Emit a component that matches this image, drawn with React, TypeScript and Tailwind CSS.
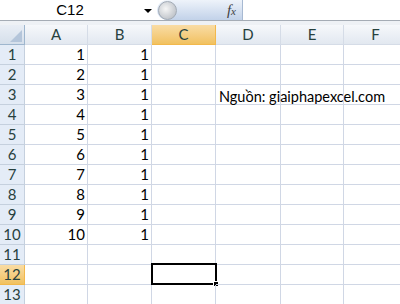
import React from "react";

const cols = ["A", "B", "C", "D", "E", "F"];
const widths = [63, 64, 64, 65, 63, 64];
const rows = Array.from({ length: 13 }, (_, i) => i + 1);

function cellText(r: number, c: number) {
  if (r <= 10 && c === 0) return String(r);
  if (r <= 10 && c === 1) return "1";
  return "";
}

export default function App() {
  return (
    <div className="w-[400px] h-[304px] overflow-hidden bg-white font-['Lato','Liberation_Sans',sans-serif] text-[15px] text-black">
      {/* formula bar */}
      <div className="flex h-[21px] items-stretch border-b border-[#a5acb5] bg-white">
        <div className="relative w-[157px] flex items-center">
          <span className="w-[140px] text-center font-['Liberation_Sans',sans-serif] text-[15px]">C12</span>
          <span className="absolute left-[144px] top-[9px] h-0 w-0 border-x-[4px] border-t-[4px] border-x-transparent border-t-black" />
        </div>
        <div className="relative flex w-[86px] items-center rounded-l-full bg-gradient-to-b from-[#eef3fa] to-[#c2d2e9] border-r border-[#a7b9d2]">
          <div className="ml-[1px] h-[19px] w-[19px] rounded-full bg-[radial-gradient(circle_at_40%_40%,#f6f6f6,#aeb4bc)] border border-[#a3abb5]" />
          <span className="ml-auto mr-[6px] font-['Liberation_Serif',serif] italic text-[15px] text-[#3f3f3f]">
            f<span className="text-[11px]">x</span>
          </span>
        </div>
        <div className="flex-1" />
      </div>
      <div className="h-[4px] bg-[#eef1f5]" />
      {/* sheet */}
      <div className="flex flex-col">
        <div className="flex h-[20px]">
          <div className="relative w-[25px] shrink-0 border-r border-b border-[#9eb6ce] bg-gradient-to-b from-[#e9eef5] to-[#d5dfeb]">
            <svg className="absolute right-[2px] bottom-[2px]" width="12" height="12" viewBox="0 0 12 12">
              <polygon points="12,0 12,12 0,12" fill="#b4c5da" />
            </svg>
          </div>
          {cols.map((c, i) =>
            c === "C" ? (
              <div key={c} style={{ width: widths[i] }} className="shrink-0 flex items-center justify-center border-r border-b border-[#f2b84c] bg-gradient-to-b from-[#f9dca4] to-[#f1c15f] text-[#27413e] text-[15px]">
                {c}
              </div>
            ) : (
              <div key={c} style={{ width: widths[i] }} className="shrink-0 flex items-center justify-center border-r border-b border-[#d5dce7] bg-gradient-to-b from-[#f6f8fb] to-[#e2e8f0] text-[#27413e] text-[15px]">
                {c}
              </div>
            )
          )}
        </div>
        {rows.map((r) => (
          <div key={r} className="flex h-[20px]">
            <div
              className={
                r === 12
                  ? "w-[25px] shrink-0 flex items-center justify-center border-r border-b border-[#f2b84c] bg-gradient-to-b from-[#f9dca4] to-[#f1c15f] text-[#27413e] text-[15px]"
                  : "w-[25px] shrink-0 flex items-center justify-center border-r border-b border-[#c5d0de] bg-[#e4ecf7] text-[#27413e] text-[15px]"
              }
            >
              {r}
            </div>
            {cols.map((c, i) => (
              <div
                key={c}
                style={{ width: widths[i] }}
                className="relative shrink-0 flex items-center justify-end border-r border-b border-[#d0d7e5] pr-[2px] text-[15px]"
              >
                {cellText(r, i)}
                {r === 3 && c === "D" && (
                  <span className="absolute left-[3px] top-[1px] whitespace-nowrap text-[14.5px]">Nguồn: giaiphapexcel.com</span>
                )}
                {r === 12 && c === "C" && (
                  <div className="absolute -left-[1px] -top-[2px] h-[22px] w-[66px] border-[2px] border-black">
                    <span className="absolute -right-[4px] -bottom-[4px] h-[6px] w-[6px] bg-black border border-white" />
                  </div>
                )}
              </div>
            ))}
          </div>
        ))}
      </div>
    </div>
  );
}
